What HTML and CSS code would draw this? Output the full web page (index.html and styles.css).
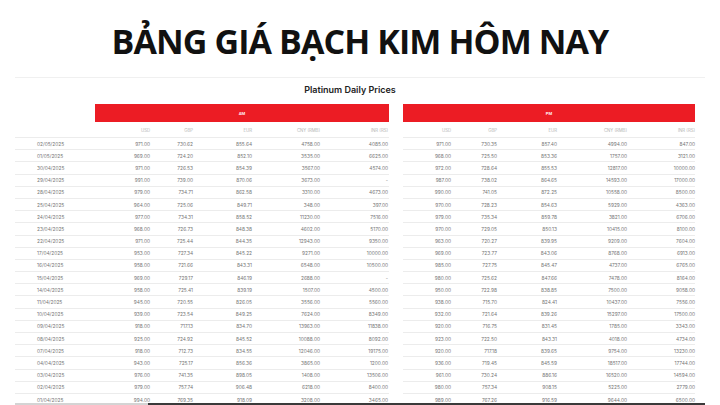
FILE: index.html
```html
<!DOCTYPE html>
<html lang="vi">
<head>
<meta charset="utf-8">
<title>Bảng giá bạch kim hôm nay</title>
<link rel="stylesheet" href="styles.css">
</head>
<body>
<div class="page">
  <h1 class="title">BẢNG GIÁ BẠCH KIM HÔM NAY</h1>
  <div class="divider"></div>
  <h2 class="subtitle">Platinum Daily Prices</h2>
  <div class="tables">
    <div class="panel panel-am">
      <div class="band"><div class="band-spacer"></div><div class="bar">AM</div></div>
      <div class="row head"><span class="date"></span><span>USD</span><span>GBP</span><span>EUR</span><span>CNY (RMB)</span><span>INR (RS)</span></div>
      <div class="row"><span class="date">02/05/2025</span><span>971.00</span><span>730.62</span><span>855.64</span><span>4758.00</span><span>4085.00</span></div>
      <div class="row"><span class="date">01/05/2025</span><span>969.00</span><span>724.20</span><span>852.10</span><span>3535.00</span><span>6625.00</span></div>
      <div class="row"><span class="date">30/04/2025</span><span>971.00</span><span>726.53</span><span>854.39</span><span>3567.00</span><span>4574.00</span></div>
      <div class="row"><span class="date">29/04/2025</span><span>991.00</span><span>739.00</span><span>870.06</span><span>3673.00</span><span>-</span></div>
      <div class="row"><span class="date">28/04/2025</span><span>979.00</span><span>734.71</span><span>862.58</span><span>3310.00</span><span>4673.00</span></div>
      <div class="row"><span class="date">25/04/2025</span><span>964.00</span><span>725.06</span><span>849.71</span><span>348.00</span><span>397.00</span></div>
      <div class="row"><span class="date">24/04/2025</span><span>977.00</span><span>734.31</span><span>858.52</span><span>11230.00</span><span>7516.00</span></div>
      <div class="row"><span class="date">23/04/2025</span><span>968.00</span><span>726.73</span><span>848.38</span><span>4602.00</span><span>5170.00</span></div>
      <div class="row"><span class="date">22/04/2025</span><span>971.00</span><span>725.44</span><span>844.35</span><span>12943.00</span><span>9350.00</span></div>
      <div class="row"><span class="date">17/04/2025</span><span>953.00</span><span>727.34</span><span>845.22</span><span>9271.00</span><span>10000.00</span></div>
      <div class="row"><span class="date">16/04/2025</span><span>958.00</span><span>721.66</span><span>843.31</span><span>6548.00</span><span>10500.00</span></div>
      <div class="row"><span class="date">15/04/2025</span><span>969.00</span><span>729.17</span><span>846.19</span><span>2688.00</span><span>-</span></div>
      <div class="row"><span class="date">14/04/2025</span><span>958.00</span><span>725.41</span><span>839.19</span><span>1507.00</span><span>4500.00</span></div>
      <div class="row"><span class="date">11/04/2025</span><span>945.00</span><span>720.55</span><span>826.05</span><span>3556.00</span><span>5560.00</span></div>
      <div class="row"><span class="date">10/04/2025</span><span>939.00</span><span>723.54</span><span>849.25</span><span>7624.00</span><span>8349.00</span></div>
      <div class="row"><span class="date">09/04/2025</span><span>918.00</span><span>717.13</span><span>834.70</span><span>13963.00</span><span>11838.00</span></div>
      <div class="row"><span class="date">08/04/2025</span><span>925.00</span><span>724.92</span><span>845.52</span><span>10088.00</span><span>8092.00</span></div>
      <div class="row"><span class="date">07/04/2025</span><span>918.00</span><span>712.73</span><span>834.55</span><span>12046.00</span><span>19175.00</span></div>
      <div class="row"><span class="date">04/04/2025</span><span>943.00</span><span>725.17</span><span>856.36</span><span>3865.00</span><span>1200.00</span></div>
      <div class="row"><span class="date">03/04/2025</span><span>976.00</span><span>741.35</span><span>898.05</span><span>1408.00</span><span>13506.00</span></div>
      <div class="row"><span class="date">02/04/2025</span><span>979.00</span><span>757.74</span><span>906.48</span><span>6218.00</span><span>8400.00</span></div>
      <div class="row"><span class="date">01/04/2025</span><span>994.00</span><span>769.35</span><span>918.09</span><span>3208.00</span><span>3465.00</span></div>
    </div>
    <div class="panel panel-pm">
      <div class="band"><div class="bar">PM</div></div>
      <div class="row head"><span>USD</span><span>GBP</span><span>EUR</span><span>CNY (RMB)</span><span>INR (RS)</span></div>
      <div class="row"><span>971.00</span><span>730.35</span><span>857.40</span><span>4994.00</span><span>847.00</span></div>
      <div class="row"><span>968.00</span><span>725.50</span><span>853.36</span><span>1757.00</span><span>3121.00</span></div>
      <div class="row"><span>972.00</span><span>728.64</span><span>855.53</span><span>12817.00</span><span>10000.00</span></div>
      <div class="row"><span>987.00</span><span>738.02</span><span>864.65</span><span>14593.00</span><span>17000.00</span></div>
      <div class="row"><span>990.00</span><span>741.05</span><span>872.25</span><span>10558.00</span><span>8500.00</span></div>
      <div class="row"><span>970.00</span><span>728.23</span><span>854.63</span><span>5929.00</span><span>4363.00</span></div>
      <div class="row"><span>979.00</span><span>735.34</span><span>859.78</span><span>3821.00</span><span>6706.00</span></div>
      <div class="row"><span>970.00</span><span>729.05</span><span>850.13</span><span>10415.00</span><span>8100.00</span></div>
      <div class="row"><span>963.00</span><span>720.27</span><span>839.95</span><span>9209.00</span><span>7604.00</span></div>
      <div class="row"><span>969.00</span><span>723.77</span><span>843.06</span><span>8768.00</span><span>6913.00</span></div>
      <div class="row"><span>985.00</span><span>727.75</span><span>845.47</span><span>4737.00</span><span>6765.00</span></div>
      <div class="row"><span>980.00</span><span>725.62</span><span>847.66</span><span>7478.00</span><span>8164.00</span></div>
      <div class="row"><span>950.00</span><span>722.98</span><span>838.85</span><span>7500.00</span><span>9058.00</span></div>
      <div class="row"><span>938.00</span><span>715.70</span><span>824.41</span><span>10437.00</span><span>7556.00</span></div>
      <div class="row"><span>932.00</span><span>721.64</span><span>839.26</span><span>15297.00</span><span>17500.00</span></div>
      <div class="row"><span>920.00</span><span>716.75</span><span>831.45</span><span>1785.00</span><span>3343.00</span></div>
      <div class="row"><span>923.00</span><span>722.50</span><span>843.31</span><span>4018.00</span><span>4734.00</span></div>
      <div class="row"><span>920.00</span><span>717.18</span><span>839.65</span><span>9754.00</span><span>13230.00</span></div>
      <div class="row"><span>936.00</span><span>719.45</span><span>845.59</span><span>18517.00</span><span>17744.00</span></div>
      <div class="row"><span>961.00</span><span>730.24</span><span>886.16</span><span>16520.00</span><span>14594.00</span></div>
      <div class="row"><span>980.00</span><span>757.34</span><span>908.15</span><span>5225.00</span><span>2779.00</span></div>
      <div class="row"><span>989.00</span><span>767.26</span><span>916.59</span><span>9644.00</span><span>6500.00</span></div>
    </div>
  </div>
  <div class="scrollbar"><div class="scroll-track"></div><div class="scroll-thumb"></div></div>
</div>
</body>
</html>
```
FILE: styles.css
```css
html, body {
  margin: 0;
  padding: 0;
  background: #ffffff;
  overflow: hidden;
}
.page {
  width: 720px;
  height: 405px;
  overflow: hidden;
  position: relative;
  font-family: "Inter", "Open Sans", sans-serif;
}
.title {
  margin: 0;
  padding-top: 19px;
  height: 44px;
  line-height: 44px;
  font-family: "Open Sans", "Noto Sans", sans-serif;
  font-weight: 700;
  font-size: 34px;
  color: #111111;
  text-align: center;
  letter-spacing: -0.9px;
}
.divider {
  margin: 14px 15px 0;
  height: 1px;
  background: #f0f0f0;
}
.subtitle {
  margin: 6px 0 0;
  padding-right: 20px;
  height: 12px;
  line-height: 12px;
  font-size: 9px;
  font-weight: 600;
  color: #222222;
  text-align: center;
}
.tables {
  display: flex;
  gap: 14px;
  margin: 8px 0 0 15px;
}
.panel-am { width: 374px; }
.panel-pm { width: 292px; }
.band {
  display: flex;
  height: 18px;
}
.band-spacer { width: 80px; }
.bar {
  flex: 1;
  background: #ec1c24;
  color: #ffffff;
  font-size: 4px;
  font-weight: 600;
  display: flex;
  align-items: center;
  justify-content: center;
}
.row {
  display: grid;
  box-sizing: border-box;
  height: 12.2px;
  border-bottom: 1px solid #ececec;
  font-size: 4.8px;
  color: #747474;
  align-items: center;
}
.panel-am .row { grid-template-columns: 80px 55px 43px 59px 68px 69px; }
.panel-pm .row { grid-template-columns: 48px 46px 60px 70px 68px; }
.row span {
  text-align: right;
  white-space: nowrap;
}
.panel-am .row span:last-child { padding-right: 1px; }
.row .date {
  text-align: left;
  padding-left: 22px;
}
.row.head {
  height: 16px;
  padding-top: 2px;
  color: #b4b4b4;
  font-size: 4.3px;
}
.scrollbar {
  position: absolute;
  left: 15px;
  right: 15px;
  bottom: 0;
  height: 2px;
  display: flex;
}
.scroll-track {
  width: 133px;
  background: #d4d4d4;
}
.scroll-thumb {
  flex: 1;
  background: #3a3a3a;
}
```
